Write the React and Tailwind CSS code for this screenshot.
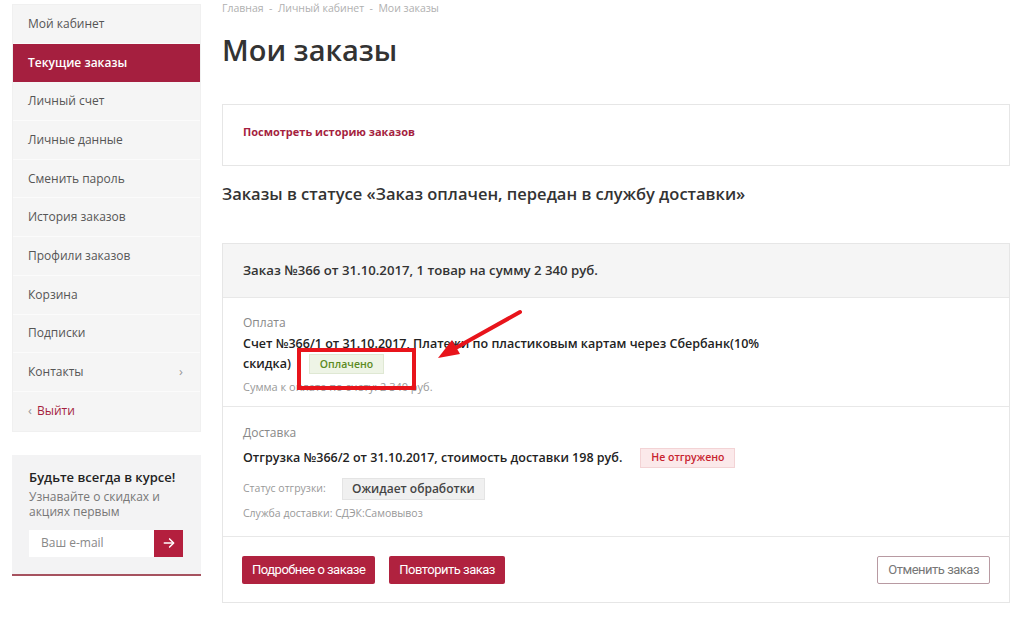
import React from 'react';

const menu = [
    'Мой кабинет',
    'Текущие заказы',
    'Личный счет',
    'Личные данные',
    'Сменить пароль',
    'История заказов',
    'Профили заказов',
    'Корзина',
    'Подписки',
];

function Sidebar() {
    return (
        <aside className="w-[189px] shrink-0 pt-[4px]">
            <ul className="bg-[#f5f5f5] border border-[#f0f0f0]">
                {menu.map((item) => (
                    <li
                        key={item}
                        className={
                            item === 'Текущие заказы'
                                ? 'h-[38.7px] flex items-center px-[15px] text-[12px] bg-[#a51f3f] text-white font-semibold'
                                : 'h-[38.7px] flex items-center px-[15px] text-[12px] text-[#555] border-b border-[#fbfbfb]'
                        }
                    >
                        {item}
                    </li>
                ))}
                <li className="h-[38.7px] flex items-center justify-between px-[15px] text-[12px] text-[#555] border-b border-[#fbfbfb]">
                    <span>Контакты</span>
                    <span className="text-[#999] text-[13px] pr-[2px]">›</span>
                </li>
                <li className="h-[38.7px] flex items-center px-[15px] text-[12px]">
                    <span className="text-[#999] text-[13px] mr-[5px] -mt-[1px]">‹</span>
                    <span className="text-[#a51f3f]">Выйти</span>
                </li>
            </ul>

            <div className="mt-[23px] bg-[#f3f3f4] border-b-2 border-[#a6525f] pl-[17px] pr-[10px] pt-[13px] pb-[17px]">
                <div className="text-[13px] leading-[18px] font-semibold text-[#222] whitespace-nowrap">Будьте всегда в курсе!</div>
                <div className="mt-[3px] text-[12px] leading-[15px] text-[#777]">
                    Узнавайте о скидках и
                    <br />
                    акциях первым
                </div>
                <div className="mt-[11px] flex h-[27px] w-[154px]">
                    <div className="flex-1 bg-white flex items-center pl-[12px] text-[12px] text-[#888]">Ваш e-mail</div>
                    <div className="w-[29px] bg-[#b41f3e] flex items-center justify-center">
                        <svg width="14" height="14" viewBox="0 0 24 24" fill="none" stroke="white" strokeWidth="2.6" strokeLinecap="round" strokeLinejoin="round">
                            <path d="M4 12h15" />
                            <path d="M13 5l7 7-7 7" />
                        </svg>
                    </div>
                </div>
            </div>
        </aside>
    );
}

function Badge({ className, children }) {
    return (
        <span className={'inline-flex items-center justify-center h-[20px] px-[10px] text-[10.5px] font-semibold border ' + className}>
            {children}
        </span>
    );
}

function OrderCard() {
    return (
        <div className="border border-[#e6e6e6]">
            <div className="h-[54px] bg-[#f5f5f5] border-b border-[#e8e8e8] flex items-center px-[20px] text-[13.2px] font-semibold text-[#333]">
                Заказ №366 от 31.10.2017, 1 товар на сумму 2 340 руб.
            </div>

            <div className="px-[20px] pt-[16px] pb-[12px] border-b border-[#e8e8e8]">
                <div className="text-[12px] leading-[17px] text-[#888]">Оплата</div>
                <div className="mt-[3px] w-[540px] text-[12.5px] leading-[20px] font-semibold text-[#222]">
                    Счет №366/1 от 31.10.2017, Платежи по пластиковым картам через Сбербанк(10% скидка)
                    <Badge className="ml-[18px] bg-[#eef4e6] border-[#dfe8d3] text-[#5b8a22]">Оплачено</Badge>
                </div>
                <div className="mt-[5px] text-[11px] leading-[15px] text-[#999]">Сумма к оплате по счету: 2 340 руб.</div>
            </div>

            <div className="px-[20px] pt-[17px] pb-[15px] border-b border-[#e8e8e8]">
                <div className="text-[12px] leading-[17px] text-[#888]">Доставка</div>
                <div className="mt-[7px] flex items-center">
                    <span className="text-[12.5px] leading-[20px] font-semibold text-[#222]">
                        Отгрузка №366/2 от 31.10.2017, стоимость доставки 198 руб.
                    </span>
                    <Badge className="ml-[18px] bg-[#fbe9ea] border-[#f3d3d5] text-[#c8232f]">Не отгружено</Badge>
                </div>
                <div className="mt-[10px] flex items-center">
                    <span className="w-[99px] text-[10.5px] text-[#999]">Статус отгрузки:</span>
                    <span className="inline-flex items-center h-[22px] px-[9px] bg-[#f0f0f0] border border-[#e4e4e4] text-[12px] font-semibold text-[#444]">
                        Ожидает обработки
                    </span>
                </div>
                <div className="mt-[6px] text-[10.5px] leading-[15px] text-[#999]">Служба доставки: СДЭК:Самовывоз</div>
            </div>

            <div className="px-[19px] pt-[19px] pb-[18px] flex items-center">
                <button className="h-[28px] px-[10px] bg-[#b0223f] text-white text-[13px] rounded-[2px] font-['Roboto'] tracking-[-0.5px]">
                    Подробнее о заказе
                </button>
                <button className="ml-[14px] h-[28px] px-[10px] bg-[#b0223f] text-white text-[13px] rounded-[2px] font-['Roboto'] tracking-[-0.5px]">
                    Повторить заказ
                </button>
                <button className="ml-auto h-[28px] px-[10px] bg-white border border-[#b89aa2] text-[#777] text-[13px] rounded-[2px] font-['Roboto'] tracking-[-0.5px]">
                    Отменить заказ
                </button>
            </div>
        </div>
    );
}

function App() {
    return (
        <div className="relative min-h-[621px] bg-white font-['Open_Sans',sans-serif] flex px-[12px] gap-[21px]">
            <Sidebar />

            <main className="w-[788px]">
                <div className="pt-[1px] text-[10.5px] text-[#b0b0b0] leading-[14px]">
                    Главная&nbsp;&nbsp;-&nbsp;&nbsp;Личный кабинет&nbsp;&nbsp;-&nbsp;&nbsp;Мои заказы
                </div>
                <h1 className="mt-[17px] text-[29px] leading-[36px] font-semibold text-[#333]">Мои заказы</h1>

                <div className="mt-[36px] h-[62px] border border-[#e6e6e6] px-[20px] pt-[13px]">
                    <a className="text-[11px] font-bold text-[#a51f3f]">Посмотреть историю заказов</a>
                </div>

                <h3 className="mt-[17px] text-[16.5px] leading-[22px] font-semibold text-[#333]">
                    Заказы в статусе «Заказ оплачен, передан в службу доставки»
                </h3>

                <div className="mt-[38px]">
                    <OrderCard />
                </div>
            </main>

            {/* red annotation overlay */}
            <svg className="absolute left-0 top-0 pointer-events-none" width="1024" height="621">
                <rect x="299" y="350" width="115" height="38" fill="none" stroke="#e8141b" strokeWidth="4" />
                <line x1="520" y1="312" x2="452" y2="350" stroke="#e8141b" strokeWidth="4" strokeLinecap="round" />
                <polygon points="438,358 452,340 460,354" fill="#e8141b" />
            </svg>
        </div>
    );
}

export default App;
